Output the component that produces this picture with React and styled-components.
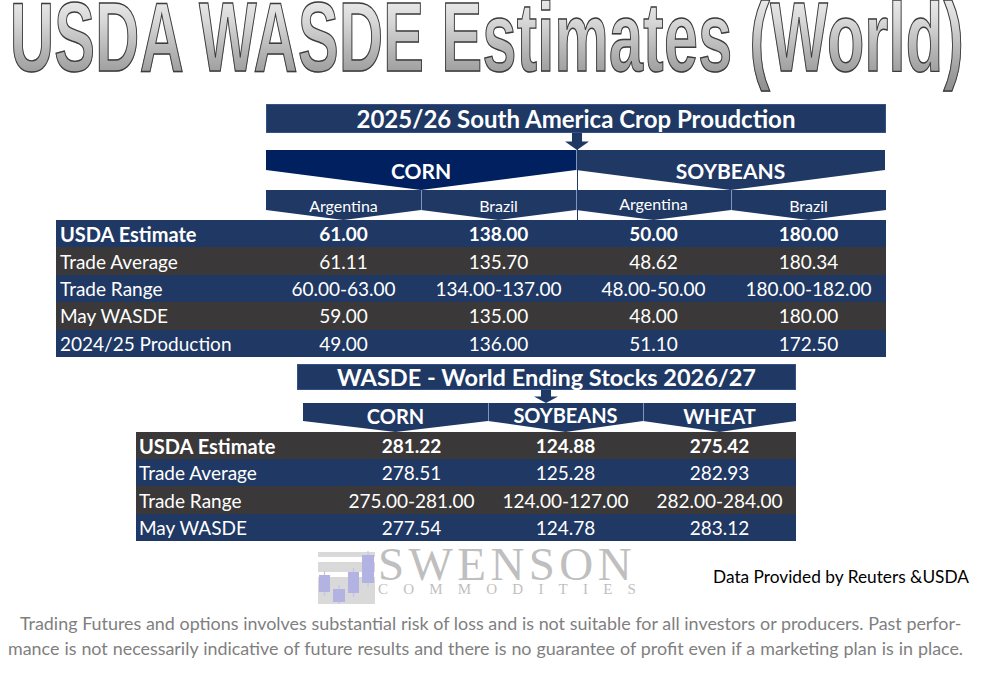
import React from "react"
import styled, { createGlobalStyle } from "styled-components"

const NAVY = "#1f3864"
const DEEP = "#002060"
const SLATE = "#3a3838"

const GlobalStyle = createGlobalStyle`
  html, body {
    margin: 0;
    padding: 0;
    background: #ffffff;
  }
  body {
    font-family: Lato, "Open Sans", sans-serif;
  }
`

const cropRows = [
  { label: "USDA Estimate", values: ["61.00", "138.00", "50.00", "180.00"], bold: true },
  { label: "Trade Average", values: ["61.11", "135.70", "48.62", "180.34"] },
  { label: "Trade Range", values: ["60.00-63.00", "134.00-137.00", "48.00-50.00", "180.00-182.00"] },
  { label: "May WASDE", values: ["59.00", "135.00", "48.00", "180.00"] },
  { label: "2024/25 Production", values: ["49.00", "136.00", "51.10", "172.50"] },
]

const stockRows = [
  { label: "USDA Estimate", values: ["281.22", "124.88", "275.42"], bold: true },
  { label: "Trade Average", values: ["278.51", "125.28", "282.93"] },
  { label: "Trade Range", values: ["275.00-281.00", "124.00-127.00", "282.00-284.00"] },
  { label: "May WASDE", values: ["277.54", "124.78", "283.12"] },
]

const Page = styled.div`
  width: 1001px;
  height: 682px;
  overflow: hidden;
  display: flex;
  flex-direction: column;
`

const TitleBar = styled.div`
  display: flow-root;
  height: 96px;
  padding-left: 10px;
  white-space: nowrap;
`

// the title is a tall, squeezed bold face: drawn small and stretched upward
const TitleText = styled.h1`
  display: inline-block;
  margin: -10.6px 0 0 0;
  padding: 0 0 5px 0;
  font-family: "Liberation Sans", Arial, sans-serif;
  font-weight: 700;
  font-size: 61px;
  line-height: 61px;
  letter-spacing: 0.3px;
  transform: scaleY(1.6);
  transform-origin: 0 0;
  background: linear-gradient(180deg, #f2f2f2 0%, #d8d8d8 30%, #b3b3b3 60%, #989898 85%, #8c8c8c 100%);
  -webkit-background-clip: text;
  background-clip: text;
  color: transparent;
  -webkit-text-stroke: 0.9px #3c3c3c;
`

const Section = styled.section`
  margin-left: ${p => p.$left}px;
  margin-top: ${p => p.$top}px;
  width: ${p => p.$width}px;
  display: flex;
  flex-direction: column;
`

const Banner = styled.div`
  margin-left: ${p => p.$offset}px;
  width: ${p => p.$width}px;
  height: ${p => p.$height}px;
  background: ${NAVY};
  box-shadow: inset 0 0 0 1px #34518a;
  color: #ffffff;
  font-weight: 700;
  font-size: ${p => p.$size}px;
  display: flex;
  align-items: center;
  justify-content: center;
  white-space: nowrap;
`

const Tree = styled.div`
  position: relative;
  display: flex;
  flex-direction: column;

  &::before {
    content: "";
    display: ${p => (p.$line ? "block" : "none")};
    position: absolute;
    left: ${p => p.$line}px;
    top: 0;
    bottom: 0;
    width: 1px;
    background: ${NAVY};
  }
`

const Connector = styled.div`
  height: ${p => p.$height}px;
  padding-left: ${p => p.$at - 12}px;
  position: relative;
  z-index: 1;
`

const DownArrow = styled.div`
  width: 24px;
  height: 100%;
  background: ${NAVY};
  clip-path: polygon(29% 0, 71% 0, 71% 50%, 100% 50%, 50% 100%, 0 50%, 29% 50%);
`

const ChevronRow = styled.div`
  margin-left: ${p => p.$offset}px;
  display: grid;
  grid-template-columns: ${p => p.$cols};
  position: relative;
  z-index: 1;
`

const Chevron = styled.div`
  height: ${p => p.$h}px;
  background: ${p => p.$bg || NAVY};
  box-shadow: ${p => (p.$edge ? "inset 1px 0 0 #7f95c0" : "none")};
  clip-path: polygon(0 0, 100% 0, 100% calc(100% - ${p => p.$d}px), 50% 100%, 0 calc(100% - ${p => p.$d}px));
  color: #ffffff;
  font-size: ${p => p.$size}px;
  font-weight: ${p => (p.$bold ? 700 : 400)};
  display: flex;
  align-items: center;
  justify-content: center;
  padding-bottom: ${p => p.$lift || 0}px;
  box-sizing: border-box;
  white-space: nowrap;
`

const Table = styled.div`
  display: flex;
  flex-direction: column;
  width: ${p => p.$width}px;
`

const Row = styled.div`
  display: grid;
  grid-template-columns: ${p => p.$cols};
  height: ${p => p.$h}px;
  align-items: center;
  background: ${p => (p.$dark ? SLATE : NAVY)};
  color: #ffffff;
  font-size: 19px;
  font-weight: ${p => (p.$bold ? 700 : 400)};
  white-space: nowrap;
`

const Label = styled.div`
  padding-left: ${p => p.$pad}px;
  font-size: ${p => (p.$bold ? 20 : 19)}px;
`

const Value = styled.div`
  text-align: center;
`

const Footer = styled.div`
  margin-top: 7px;
  height: 58px;
  padding-left: 318px;
  display: grid;
  grid-template-columns: 395px 1fr;
  align-items: start;
`

const Logo = styled.div`
  display: flex;
  align-items: flex-start;
`

const LogoWords = styled.div`
  display: flex;
  flex-direction: column;
  margin-left: 3px;
  color: #bfbfbf;
  font-family: "Liberation Serif", "Times New Roman", serif;
`

const LogoName = styled.div`
  font-size: 47px;
  line-height: 33px;
  letter-spacing: 4.4px;
  height: 33px;
`

const LogoTag = styled.div`
  font-size: 15px;
  line-height: 16px;
  letter-spacing: 15.2px;
`

const DataNote = styled.div`
  margin-top: 18px;
  font-size: 17.3px;
  color: #000000;
  white-space: nowrap;
`

const Disclaimer = styled.div`
  margin-top: 5px;
  display: flex;
  flex-direction: column;
  color: #7f7f7f;
  font-size: 17.9px;
  line-height: 25px;
  white-space: nowrap;
`

const DisclaimerLine = styled.div`
  margin-left: ${p => p.$left}px;
  word-spacing: ${p => p.$spread}px;
`

function SwensonMark() {
  const candles = [
    { x: 1, w: 11, top: 27, bottom: 44 },
    { x: 15, w: 12, top: 41, bottom: 54 },
    { x: 30, w: 11, top: 24, bottom: 45 },
    { x: 44, w: 12, top: 7, bottom: 35 },
  ]
  return (
    <svg width="57" height="56" viewBox="0 0 57 56">
      <rect x="0" y="4" width="57" height="5" fill="#d9d9d9" />
      <rect x="0" y="14" width="57" height="10" fill="#d9d9d9" />
      <rect x="0" y="29" width="57" height="27" fill="#d9d9d9" />
      {candles.map((c, i) => (
        <g key={i}>
          <rect x={c.x + c.w / 2 - 0.6} y={c.top - 4} width="1.2" height={c.bottom - c.top + 8} fill="#c4c4ec" />
          <rect x={c.x} y={c.top} width={c.w} height={c.bottom - c.top} fill="#b3b3e3" />
        </g>
      ))}
    </svg>
  )
}

const cropCols = "210px 155px 155px 155px 155px"
const stockCols = "199px 153px 155px 153px"

export default function App() {
  return (
    <Page>
      <GlobalStyle />
      <TitleBar>
        <TitleText>USDA WASDE Estimates (World)</TitleText>
      </TitleBar>

      <Section $left={56} $top={8} $width={830}>
        <Banner $offset={210} $width={620} $height={29} $size={24}>
          2025/26 South America Crop Proudction
        </Banner>
        <Tree $line={521}>
          <Connector $height={17} $at={521}>
            <DownArrow />
          </Connector>
          <ChevronRow $offset={210} $cols="310px 309px">
            <Chevron $h={40} $d={20} $bg={DEEP} $size={21} $bold>CORN</Chevron>
            <Chevron $h={40} $d={20} $size={21} $bold $edge>SOYBEANS</Chevron>
          </ChevronRow>
          <ChevronRow $offset={210} $cols="155px 155px 155px 155px">
            <Chevron $h={30} $d={10} $size={16}>Argentina</Chevron>
            <Chevron $h={30} $d={10} $size={16} $edge>Brazil</Chevron>
            <Chevron $h={30} $d={10} $size={16} $edge $lift={4}>Argentina</Chevron>
            <Chevron $h={30} $d={10} $size={16} $edge>Brazil</Chevron>
          </ChevronRow>
        </Tree>
        <Table $width={830}>
          {cropRows.map((r, i) => (
            <Row key={r.label} $cols={cropCols} $h={27.4} $dark={i % 2 === 1} $bold={r.bold}>
              <Label $pad={4} $bold={r.bold}>{r.label}</Label>
              {r.values.map((v, j) => (
                <Value key={j}>{v}</Value>
              ))}
            </Row>
          ))}
        </Table>
      </Section>

      <Section $left={136} $top={7} $width={660}>
        <Banner $offset={161} $width={499} $height={26} $size={23.5}>
          WASDE - World Ending Stocks 2026/27
        </Banner>
        <Tree>
          <Connector $height={13} $at={410}>
            <DownArrow />
          </Connector>
          <ChevronRow $offset={167} $cols="185px 155px 153px">
            <Chevron $h={29} $d={11} $size={20} $bold $lift={2}>CORN</Chevron>
            <Chevron $h={29} $d={11} $size={20} $bold $edge $lift={5}>SOYBEANS</Chevron>
            <Chevron $h={29} $d={11} $size={20} $bold $edge $lift={2}>WHEAT</Chevron>
          </ChevronRow>
        </Tree>
        <Table $width={660}>
          {stockRows.map((r, i) => (
            <Row key={r.label} $cols={stockCols} $h={27.25} $dark={i % 2 === 0} $bold={r.bold}>
              <Label $pad={3} $bold={r.bold}>{r.label}</Label>
              {r.values.map((v, j) => (
                <Value key={j}>{v}</Value>
              ))}
            </Row>
          ))}
        </Table>
      </Section>

      <Footer>
        <Logo>
          <SwensonMark />
          <LogoWords>
            <LogoName>SWENSON</LogoName>
            <LogoTag>COMMODITIES</LogoTag>
          </LogoWords>
        </Logo>
        <DataNote>Data Provided by Reuters &amp;USDA</DataNote>
      </Footer>

      <Disclaimer>
        <DisclaimerLine $left={20} $spread={0.1}>
          Trading Futures and options involves substantial risk of loss and is not suitable for all investors or producers. Past perfor-
        </DisclaimerLine>
        <DisclaimerLine $left={8} $spread={0.38}>
          mance is not necessarily indicative of future results and there is no guarantee of profit even if a marketing plan is in place.
        </DisclaimerLine>
      </Disclaimer>
    </Page>
  )
}
